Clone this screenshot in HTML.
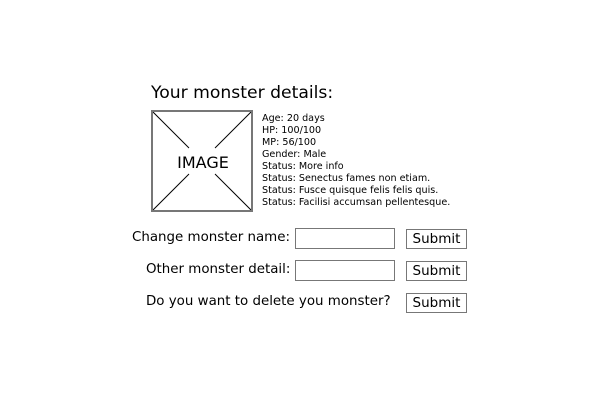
<!DOCTYPE html>
<html><head><style>
body{margin:0;width:600px;height:400px;background:#fff;position:relative;font-family:"DejaVu Sans",sans-serif;color:#000;overflow:hidden}
.a{position:absolute;white-space:nowrap}
.h{left:151px;top:83px;font-size:17.2px}
.img{left:151px;top:110px;width:98px;height:98px;border:2px solid #777}
.info{left:262px;top:113px;font-size:9.6px;line-height:12px}
.lab{font-size:13.4px}
.in{width:98px;height:19px;border:1px solid #777;background:#fff}
.btn{width:59px;height:18px;border:1px solid #777;font-size:13.5px;text-align:center;line-height:18px}
</style></head><body>
<div class="a h">Your monster details:</div>
<div class="a img">
<svg width="98" height="98" style="position:absolute;left:0;top:0">
<line x1="0" y1="0" x2="36" y2="36" stroke="#000"/>
<line x1="98" y1="0" x2="62" y2="36" stroke="#000"/>
<line x1="0" y1="98" x2="36" y2="62" stroke="#000"/>
<line x1="98" y1="98" x2="62" y2="62" stroke="#000"/>
<text x="50" y="56" font-size="16" text-anchor="middle" font-family="DejaVu Sans,sans-serif">IMAGE</text>
</svg></div>
<div class="a info">Age: 20 days<br>HP: 100/100<br>MP: 56/100<br>Gender: Male<br>Status: More info<br>Status: Senectus fames non etiam.<br>Status: Fusce quisque felis felis quis.<br>Status: Facilisi accumsan pellentesque.</div>
<div class="a lab" style="left:132px;top:230px">Change monster name:</div>
<div class="a in" style="left:295px;top:228px"></div>
<div class="a btn" style="left:406px;top:229px">Submit</div>
<div class="a lab" style="left:146px;top:262px">Other monster detail:</div>
<div class="a in" style="left:295px;top:260px"></div>
<div class="a btn" style="left:406px;top:261px">Submit</div>
<div class="a lab" style="left:146px;top:294px">Do you want to delete you monster?</div>
<div class="a btn" style="left:406px;top:293px">Submit</div>
</body></html>
